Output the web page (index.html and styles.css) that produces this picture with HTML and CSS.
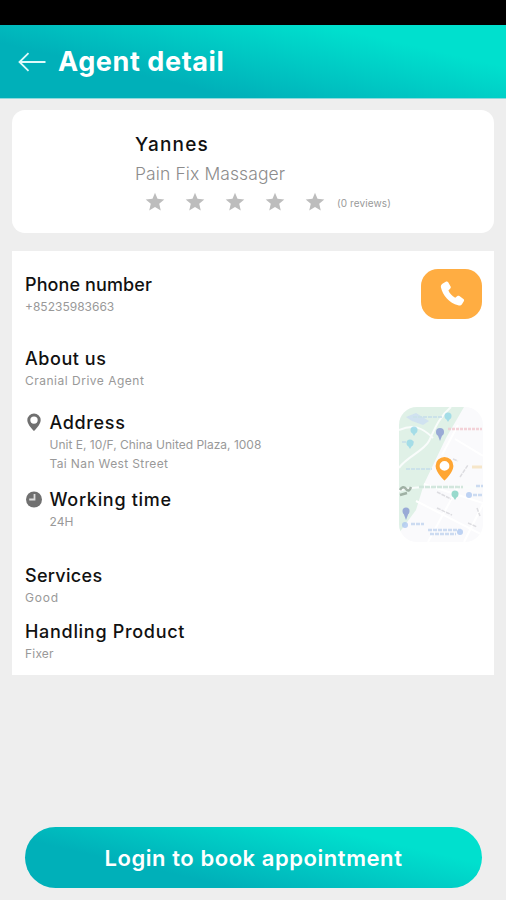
FILE: index.html
```html
<!DOCTYPE html>
<html lang="en">
<head>
<meta charset="utf-8">
<title>Agent detail</title>
<link rel="stylesheet" href="styles.css">
</head>
<body>
<div class="status"></div>
<header class="bar">
  <svg class="back" width="28" height="20" viewBox="0 0 28 20"><path d="M10.5 1.2 1.5 10l9 8.8M1.5 10H27.5"/></svg>
  <h1><span class="t-title">Agent detail</span></h1>
</header>
<main>
  <section class="profile">
    <h2 class="t-name">Yannes</h2>
    <p class="role"><span class="t-role">Pain Fix Massager</span></p>
    <div class="rating">
      <svg viewBox="0 0 20 20"><path d="M10 .8l2.500 6 6.800.6-5.100 4.400 1.600 6.600L10 14.900l-5.800 3.500 1.600-6.600L.7 7.400l6.800-.6z"/></svg>
      <svg viewBox="0 0 20 20"><path d="M10 .8l2.500 6 6.800.6-5.100 4.400 1.600 6.600L10 14.900l-5.800 3.500 1.600-6.600L.7 7.400l6.800-.6z"/></svg>
      <svg viewBox="0 0 20 20"><path d="M10 .8l2.500 6 6.800.6-5.100 4.400 1.600 6.600L10 14.900l-5.800 3.500 1.600-6.600L.7 7.400l6.800-.6z"/></svg>
      <svg viewBox="0 0 20 20"><path d="M10 .8l2.500 6 6.800.6-5.100 4.400 1.600 6.600L10 14.900l-5.800 3.500 1.600-6.600L.7 7.400l6.800-.6z"/></svg>
      <svg viewBox="0 0 20 20"><path d="M10 .8l2.500 6 6.800.6-5.100 4.400 1.600 6.600L10 14.900l-5.800 3.500 1.600-6.600L.7 7.400l6.800-.6z"/></svg>
      <span class="reviews">(0 reviews)</span>
    </div>
  </section>

  <section class="details">
    <div class="row phone">
      <div class="item"><h3 class="t-phone">Phone number</h3><p class="t-number">+85235983663</p></div>
      <button class="call" aria-label="Call"><svg width="28" height="28" viewBox="0 0 28 28"><path d="M5.200 3.200 8.200 1.600c.8-.4 1.500-.1 2 .7l2.400 4.300c.4.8.2 1.500-.3 2l-1.900 1.900c1.400 3.100 3.500 5.400 6.800 7.300l2.200-1.700c.6-.5 1.300-.5 2 0l4 3c.8.6.9 1.300.4 2.100l-1.700 2.700c-.9 1.400-2.300 1.900-4 1.400C11.300 22.900 4.700 15.500 2.900 7.200 2.600 5.400 3.500 4.100 5.200 3.200z"/></svg></button>
    </div>
    <div class="item about"><h3 class="t-about">About us</h3><p class="t-agent">Cranial Drive Agent</p></div>
    <div class="row place">
      <div>
        <div class="iconed">
          <svg width="18" height="25" viewBox="0 0 18 25"><path fill-rule="evenodd" d="M9 3.500a6.700 6.700 0 0 0-6.700 6.700C2.300 14.700 9 21 9 21s6.700-6.300 6.700-10.800A6.700 6.700 0 0 0 9 3.500zm0 2.900a3.700 3.700 0 1 1 0 7.400 3.700 3.700 0 0 1 0-7.400z"/></svg>
          <div class="item"><h3 class="t-address">Address</h3><p><span class="t-line1">Unit E, 10/F, China United Plaza, 1008</span><br><span class="t-line2">Tai Nan West Street</span></p></div>
        </div>
        <div class="iconed hours">
          <svg width="18" height="25" viewBox="0 0 18 25"><circle cx="9" cy="12.500" r="8"/><path class="hands" d="M9.500 7V12.500H4.200"/></svg>
          <div class="item"><h3 class="t-working">Working time</h3><p class="t-hours">24H</p></div>
        </div>
      </div>
      <svg class="map" width="84" height="135" viewBox="0 0 84 135">
        <rect width="84" height="135" fill="#fafafc"/>
        <path d="M0 0H65L47 31 25 77 17 103 0 126z" fill="#e0f1e7"/>
        <path d="M52 0C39 11 35 24 30 34S7 50 0 61M0 23C14 17 23 20 34 31M0 84C19 77 53 82 84 80" fill="none" stroke="#f9fcfb" stroke-width="2"/>
        <path d="M25 77 84 96M17 94 84 128M60 78 29 135M84 97 65 135M56 32 84 49M59 18 43 48" fill="none" stroke="#fff" stroke-width="2"/>
        <g class="marks">
          <path d="M7 10l10-4 13 8-6 4-11-4z" fill="#cbdcf3"/>
          <path d="M14 10H44M3 35H15M7 62H33" stroke="#c5dcea" stroke-width="2" stroke-dasharray="4 1"/>
          <path d="M49 22H83" stroke="#f1c5cc" stroke-width="2.500" stroke-dasharray="3 1"/>
          <path d="M20 80H64" stroke="#c4dfd3" stroke-width="2.500" stroke-dasharray="5 1"/>
          <path d="M61 70l8-12M38 85l14 7M38 101l15 7M69 116l9 4M54 52l5 2M78 101l3 8" stroke="#d3d3d8" stroke-width="1.500" stroke-dasharray="4 1"/>
          <path d="M73 60h10" stroke="#f5dfb8" stroke-width="3"/>
          <path d="M29 123H62M31 127H57M12 117H25M74 88h9M77 79h7" stroke="#bcd0ee" stroke-width="2.500" stroke-dasharray="4 1"/>
          <g fill="#91d6e7"><circle cx="49" cy="9" r="3.500"/><circle cx="15" cy="23" r="3.500"/><circle cx="11" cy="36" r="3.500"/><path d="M46 10h6l-3 5zM12 24h6l-3 5zM8 37h6l-3 5z"/></g>
          <g fill="#8292d0"><circle cx="41" cy="25" r="4"/><path d="M38 26h6l-3 8z"/><circle cx="7" cy="104" r="3.500"/><path d="M4 105h6l-3 8z"/></g>
          <g fill="#76cebc"><circle cx="56" cy="87" r="3.500"/><path d="M53 88h6l-3 5z"/></g>
          <g fill="#a9c5f0"><circle cx="70" cy="88" r="3"/><circle cx="61" cy="125" r="3"/><circle cx="6" cy="118" r="3"/></g>
          <path d="M1 83q3-5 6-1t5-2M1 88l7-2" fill="none" stroke="#8a9b8e" stroke-width="2.500"/>
        </g>
        <path fill="#fff" d="M45.500 53a6 6 0 1 1 0 12 6 6 0 0 1 0-12z"/>
        <path fill="#ffa633" fill-rule="evenodd" d="M45.500 50a8.900 8.900 0 0 0-8.900 8.900c0 6.400 8.900 14.600 8.900 14.600s8.900-8.200 8.900-14.600A8.900 8.900 0 0 0 45.500 50zm0 4a4.900 4.900 0 1 1 0 9.800 4.900 4.900 0 0 1 0-9.800z"/>
      </svg>
    </div>
    <div class="item services"><h3 class="t-services">Services</h3><p class="t-good">Good</p></div>
    <div class="item product"><h3 class="t-product">Handling Product</h3><p class="t-fixer">Fixer</p></div>
  </section>
</main>
<footer><button class="login"><span class="t-login">Login to book appointment</span></button></footer>
</body>
</html>
```

FILE: styles.css
```css
* { box-sizing: border-box; margin: 0; padding: 0; }
body {
  height: 900px; display: flex; flex-direction: column;
  background: #eee; color: #111; overflow: hidden;
  font-family: Inter, "Liberation Sans", sans-serif;
}
.status { height: 25px; background: #000; flex: none; }
.bar {
  height: 74px; flex: none; display: flex; align-items: center; gap: 12px; padding-left: 18px;
  background: linear-gradient(13deg, #00b0b9 29%, #00e0ce 78%);
  border-bottom: 1px solid #8ed9dc;
}
.back { fill: none; stroke: #dffafa; stroke-width: 1.8; }
h1 { font-size: 27px; font-weight: 700; color: #fff; line-height: 36px; white-space: nowrap; letter-spacing: .6px; }
main { flex: 1; padding: 11px 12px 0; }
.profile { height: 123px; padding: 21.500px 0 0 123px; background: #fff; border-radius: 13px; }
h2 { font-size: 19px; font-weight: 500; line-height: 26px; letter-spacing: 1.200px; }
.role { font-size: 17.500px; line-height: 26px; margin-top: 3px; color: #8c8c8c; font-weight: 300; letter-spacing: .1px; }
.rating { display: flex; align-items: center; gap: 20px; padding-left: 10px; height: 30px; }
.rating svg { width: 20px; height: 20px; fill: #bdbdbd; flex: none; }
.reviews { font-size: 10px; color: #999; margin: 2px 0 0 -8px; line-height: 16px; white-space: nowrap; letter-spacing: .1px; }
.details { height: 424px; margin-top: 18px; padding: 18px 12px 0 13px; background: #fff; }
.row { display: flex; justify-content: space-between; align-items: flex-start; }
h3 { font-size: 18px; font-weight: 500; line-height: 25px; margin-bottom: 1px; white-space: nowrap; }
.item p { font-size: 12px; line-height: 18.500px; color: #999; white-space: nowrap; }
.phone { height: 50px; }
.phone .item { padding-top: 3px; }
.call { width: 61px; height: 50px; border: 0; border-radius: 17px; background: #ffad42; display: flex; align-items: center; justify-content: center; }
.call svg { fill: #fff; }
.about { margin-top: 26.500px; }
.place { margin-top: 17px; height: 135px; }
.iconed { display: flex; gap: 6.500px; padding-top: 3px; }
.iconed > svg { fill: #707070; flex: none; }
.iconed .hands { fill: none; stroke: #ddd; stroke-width: 1.800; }
.hours { margin-top: 11px; }
.map { border-radius: 18px; flex: none; margin-right: -1px; }
.marks { opacity: .75; filter: blur(.5px); }
.services { margin-top: 21px; }
.product { margin-top: 11.500px; }
.t-phone { letter-spacing: .1px; }
.t-about { letter-spacing: .55px; }
.t-address { letter-spacing: .65px; }
.t-working, .t-product { letter-spacing: .7px; }
.t-services { letter-spacing: .3px; }
.t-agent { letter-spacing: .5px; }
.t-line2 { letter-spacing: .37px; }
.t-good { letter-spacing: .8px; }
.t-fixer { letter-spacing: .2px; }
footer { padding: 0 24px 12px 25px; }
.login {
  display: block; width: 100%; height: 61px; border: 0; border-radius: 31px; color: #fff;
  font: 600 22px/62px Inter, "Liberation Sans", sans-serif; white-space: nowrap; letter-spacing: .56px;
  background: linear-gradient(13deg, #00b0b9 29%, #00e0ce 78%);
}
```
